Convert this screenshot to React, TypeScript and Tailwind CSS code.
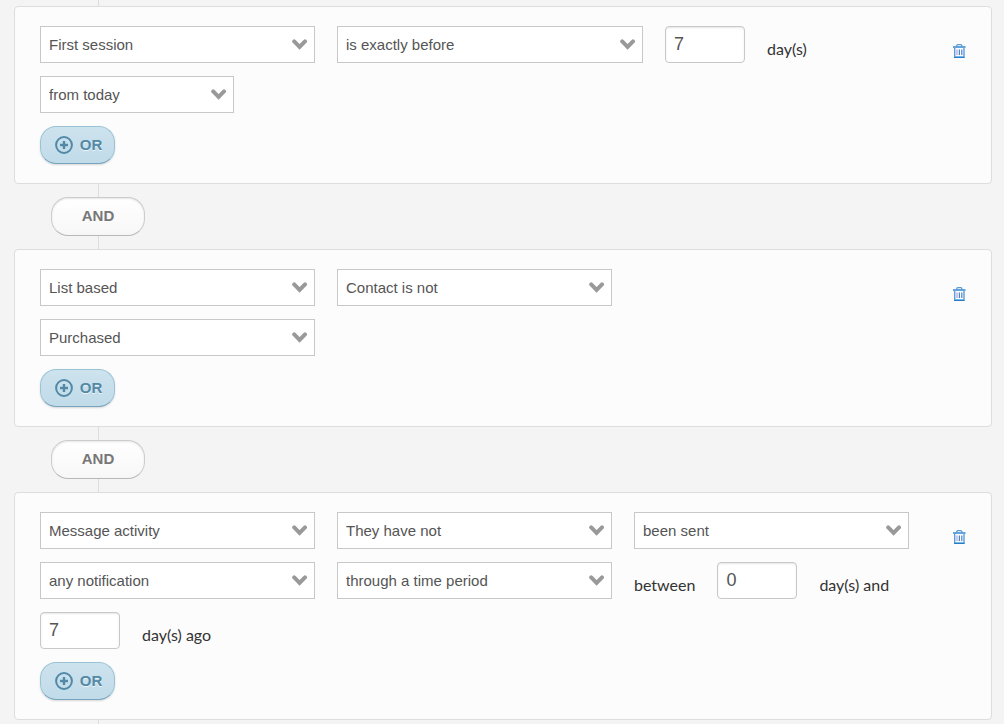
import { useState } from 'react'

type Field =
  | { kind: 'select'; name: string; value: string; options: string[]; size: 'sm' | 'md' | 'lg' }
  | { kind: 'number'; name: string; value: string }
  | { kind: 'text'; value: string }

interface Condition {
  id: string
  rows: Field[][]
}

const conditions: Condition[] = [
  {
    id: 'session',
    rows: [
      [
        { kind: 'select', name: 'Filter type', value: 'First session', options: ['Last session', 'Session count'], size: 'md' },
        { kind: 'select', name: 'Comparison', value: 'is exactly before', options: ['is exactly after', 'is between'], size: 'lg' },
        { kind: 'number', name: 'Days', value: '7' },
        { kind: 'text', value: 'day(s)' },
      ],
      [{ kind: 'select', name: 'Relative to', value: 'from today', options: ['from date'], size: 'sm' }],
    ],
  },
  {
    id: 'list',
    rows: [
      [
        { kind: 'select', name: 'Filter type', value: 'List based', options: ['Message activity'], size: 'md' },
        { kind: 'select', name: 'Membership', value: 'Contact is not', options: ['Contact is'], size: 'md' },
      ],
      [{ kind: 'select', name: 'List', value: 'Purchased', options: ['Subscribed'], size: 'md' }],
    ],
  },
  {
    id: 'message',
    rows: [
      [
        { kind: 'select', name: 'Filter type', value: 'Message activity', options: ['List based'], size: 'md' },
        { kind: 'select', name: 'Condition', value: 'They have not', options: ['They have'], size: 'md' },
        { kind: 'select', name: 'Action', value: 'been sent', options: ['opened'], size: 'md' },
      ],
      [
        { kind: 'select', name: 'Message', value: 'any notification', options: ['any email'], size: 'md' },
        { kind: 'select', name: 'Period', value: 'through a time period', options: ['at any time'], size: 'md' },
        { kind: 'text', value: 'between' },
        { kind: 'number', name: 'From days', value: '0' },
        { kind: 'text', value: 'day(s) and' },
      ],
      [
        { kind: 'number', name: 'To days', value: '7' },
        { kind: 'text', value: 'day(s) ago' },
      ],
    ],
  },
]

const selectWidths = {
  sm: 'w-[194px]',
  md: 'w-[275px]',
  lg: 'w-[306px]',
}

function SelectField({ field }: { field: Extract<Field, { kind: 'select' }> }) {
  return (
    <div className={`relative ${selectWidths[field.size]}`}>
      <select
        aria-label={field.name}
        defaultValue={field.value}
        className="block h-[37px] w-full appearance-none border border-[#c8c8c8] bg-white pl-2 pr-8 pt-[2px] text-[15px] text-[#555]"
      >
        {[field.value, ...field.options].map((option) => (
          <option key={option}>{option}</option>
        ))}
      </select>
      <svg
        viewBox="0 0 16 12"
        className="pointer-events-none absolute right-[7px] top-[13px] h-3 w-4"
        fill="none"
        stroke="#999"
        strokeWidth="4"
        strokeLinecap="round"
        aria-hidden="true"
      >
        <path d="M2.2 2.4 7.6 7.8 13 2.4" />
      </svg>
    </div>
  )
}

function ConditionField({ field }: { field: Field }) {
  if (field.kind === 'select') return <SelectField field={field} />
  if (field.kind === 'number') {
    return (
      <input
        type="text"
        inputMode="numeric"
        aria-label={field.name}
        defaultValue={field.value}
        className="h-[37px] w-20 rounded-[4px] border border-[#c8c8c8] bg-white px-2 text-[18px] text-[#555] shadow-[inset_0_1px_2px_rgba(0,0,0,0.1)]"
      />
    )
  }
  return <span className="pt-2 font-['Lato',sans-serif] text-[16px] leading-6 text-[#333]">{field.value}</span>
}

function TrashIcon() {
  return (
    <svg viewBox="0 0 13 14" className="h-[14px] w-[13px]" fill="none" aria-hidden="true">
      <path d="M3.8 2.5V1.6Q3.8 .7 4.8 .7h3q1 0 1 .9v.9" stroke="#5b9bd5" strokeWidth="1.3" />
      <path d="M0 3h12.5" stroke="#3f8fd2" strokeWidth="1.6" />
      <path d="M1.7 4v8.5M11 4v8.5" stroke="#5a9fdc" strokeWidth="1.4" />
      <path d="M1 13.2h10.7" stroke="#1779c9" strokeWidth="1.5" />
      <path d="M4 5.5v5.5" stroke="#b3a3d8" strokeWidth="1.2" />
      <path d="M6.4 5.5v5.5M8.8 5.5v5.5" stroke="#4a86c8" strokeWidth="1.2" />
    </svg>
  )
}

function ConditionCard({ condition, onDelete }: { condition: Condition; onDelete: () => void }) {
  return (
    <section className="flex items-start justify-between rounded-[4px] border border-[#ddd] bg-[#fcfcfc] px-[25px] py-[19px]">
      <div className="flex flex-col items-start gap-[13px]">
        {condition.rows.map((row, i) => (
          <div key={i} className="flex flex-wrap items-center gap-x-[22px] gap-y-[13px]">
            {row.map((field, j) => (
              <ConditionField key={j} field={field} />
            ))}
          </div>
        ))}
        <button
          type="button"
          className="flex h-[38px] w-[75px] items-center justify-center gap-[7px] rounded-[16px] border border-[#9bc3d6] border-b-[#76a5bd] bg-linear-to-b from-[#cde3ee] to-[#c1dbe9] pl-[2px] text-[15px] font-bold text-[#5389a6] shadow-[0_1px_2px_rgba(0,0,0,0.15)] [text-shadow:0_1px_0_rgba(255,255,255,0.7)]"
        >
          <svg viewBox="0 0 18 18" className="h-[18px] w-[18px]" fill="none" stroke="currentColor" aria-hidden="true">
            <circle cx="9" cy="9" r="7.9" strokeWidth="2" />
            <path d="M9 5v8M5 9h8" strokeWidth="2.4" />
          </svg>
          OR
        </button>
      </div>
      <button type="button" aria-label="Delete condition" onClick={onDelete} className="mt-[18px] shrink-0">
        <TrashIcon />
      </button>
    </section>
  )
}

function Connector() {
  return (
    <div className="ml-[37px] w-[94px]">
      <div className="ml-[47px] h-[13px] w-px bg-[#ddd]" />
      <button
        type="button"
        className="block h-[39px] w-full rounded-[17px] border border-[#ccc] border-b-[#b8b8b8] bg-linear-to-b from-white to-[#f7f7f7] text-[15px] font-bold text-[#777] shadow-[inset_0_1px_2px_rgba(0,0,0,0.1)]"
      >
        AND
      </button>
      <div className="ml-[47px] h-[13px] w-px bg-[#ddd]" />
    </div>
  )
}

export default function App() {
  const [items, setItems] = useState(conditions)

  return (
    <main className="flex min-h-screen flex-col bg-[#f4f4f4] pl-[14px] pr-3 font-['Liberation_Sans',Arial,sans-serif]">
      <div className="ml-[84px] h-[6px] w-px bg-[#ddd]" />
      {items.map((condition, i) => (
        <div key={condition.id}>
          {i > 0 && <Connector />}
          <ConditionCard
            condition={condition}
            onDelete={() => setItems(items.filter((item) => item.id !== condition.id))}
          />
        </div>
      ))}
      <div className="ml-[84px] w-px grow bg-[#ddd]" />
    </main>
  )
}
